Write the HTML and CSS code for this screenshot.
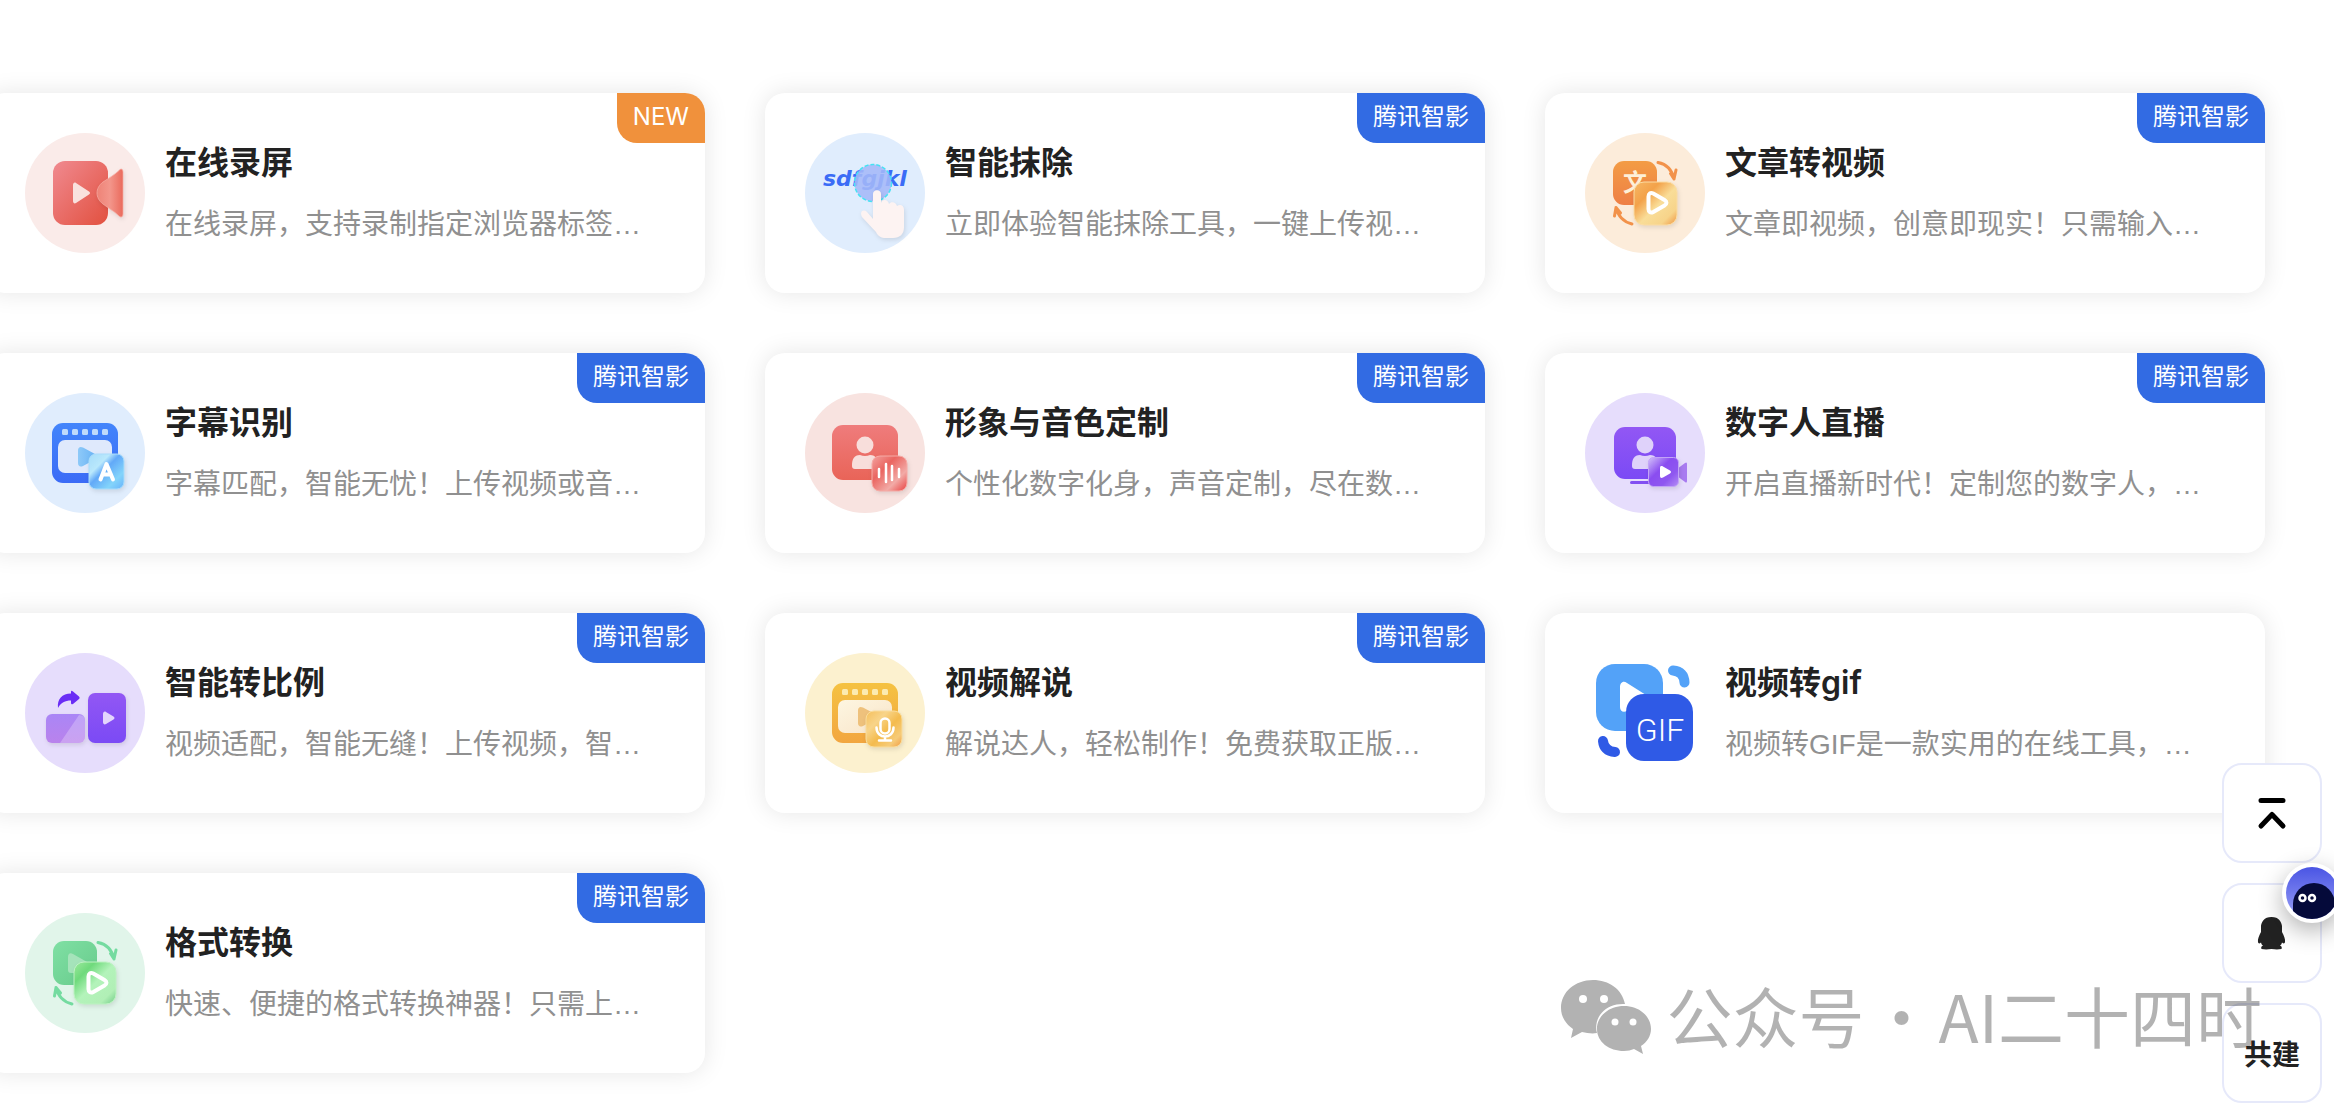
FILE: index.html
```html
<!DOCTYPE html>
<html lang="zh-CN">
<head>
  <meta charset="UTF-8">
  <meta name="viewport" content="width=device-width, initial-scale=1.0">
  <title>AI 工具</title>
  <link rel="stylesheet" href="styles.css">
</head>
<body>
  <!-- Shared gradients and shapes -->
  <svg class="defs" width="0" height="0" aria-hidden="true">
    <defs>
      <linearGradient id="red" x1="0" y1="0" x2="1" y2="1"><stop offset="0" stop-color="#f08a90"/><stop offset="1" stop-color="#e2503f"/></linearGradient>
      <linearGradient id="lens"><stop offset="0" stop-color="#ee8377"/><stop offset=".5" stop-color="#f3968b"/><stop offset="1" stop-color="#ea6a5c"/></linearGradient>
      <linearGradient id="coral" x2="0" y2="1"><stop offset="0" stop-color="#ef7c7c"/><stop offset="1" stop-color="#e96458"/></linearGradient>
      <linearGradient id="coral-glass" x1="0" y1="0" x2="1" y2="1"><stop offset="0" stop-color="#f3a3a0"/><stop offset=".35" stop-color="#ea6560"/><stop offset=".7" stop-color="#f2aaa6"/><stop offset="1" stop-color="#e93f3f"/></linearGradient>
      <linearGradient id="orange" x1="0" y1="0" x2="0" y2="1"><stop offset="0" stop-color="#f39c45"/><stop offset="1" stop-color="#ee7f45"/></linearGradient>
      <linearGradient id="orange-glass" x1="0" y1="0" x2="1" y2="1"><stop offset="0" stop-color="#f6b765"/><stop offset=".3" stop-color="#f3a24a"/><stop offset=".55" stop-color="#f9dd98"/><stop offset=".8" stop-color="#f7d48a"/><stop offset="1" stop-color="#ef9440"/></linearGradient>
      <linearGradient id="blue" x2="0" y2="1"><stop offset="0" stop-color="#4385fb"/><stop offset="1" stop-color="#3b6bf6"/></linearGradient>
      <linearGradient id="blue-play"><stop offset="0" stop-color="#8ec9f8"/><stop offset="1" stop-color="#66b2f5"/></linearGradient>
      <linearGradient id="blue-glass" x1="0" y1="0" x2="1" y2="1"><stop offset="0" stop-color="#a6dcfa"/><stop offset=".3" stop-color="#b9e8fc"/><stop offset=".45" stop-color="#62a9f8"/><stop offset=".75" stop-color="#83d4fb"/><stop offset="1" stop-color="#68b2fb"/></linearGradient>
      <linearGradient id="purple" x2="0" y2="1"><stop offset="0" stop-color="#9257f4"/><stop offset="1" stop-color="#7b4af5"/></linearGradient>
      <linearGradient id="purple-glass" x1="0" y1="0" x2="1" y2="1"><stop offset="0" stop-color="#d3c1fa"/><stop offset=".4" stop-color="#8a4df0"/><stop offset=".7" stop-color="#8f57f0"/><stop offset="1" stop-color="#b48df5"/></linearGradient>
      <linearGradient id="lilac" x2="0" y2="1"><stop offset="0" stop-color="#aa86f6"/><stop offset="1" stop-color="#b982ec"/></linearGradient>
      <linearGradient id="gold" x2="0" y2="1"><stop offset="0" stop-color="#f5c242"/><stop offset="1" stop-color="#f2a640"/></linearGradient>
      <linearGradient id="gold-window" x1="0" y1="0" x2="1" y2="1"><stop offset="0" stop-color="#fdf6e1"/><stop offset="1" stop-color="#f9e4c8"/></linearGradient>
      <linearGradient id="gold-glass" x1="0" y1="0" x2="1" y2="1"><stop offset="0" stop-color="#f5bf5c"/><stop offset=".3" stop-color="#f8d489"/><stop offset=".55" stop-color="#f4bb4e"/><stop offset=".8" stop-color="#f6cb78"/><stop offset="1" stop-color="#f19b43"/></linearGradient>
      <linearGradient id="green" x1="0" y1="0" x2="1" y2="1"><stop offset="0" stop-color="#7fe0a4"/><stop offset="1" stop-color="#68ca8b"/></linearGradient>
      <linearGradient id="green-glass" x1="0" y1="0" x2="1" y2="1"><stop offset="0" stop-color="#9cea9d"/><stop offset=".25" stop-color="#6fda7c"/><stop offset=".5" stop-color="#b3f3ba"/><stop offset=".8" stop-color="#b1efb6"/><stop offset="1" stop-color="#6fcc86"/></linearGradient>
      <linearGradient id="avatar-sky" x2="0" y2="1"><stop offset="0" stop-color="#4a55e4"/><stop offset="1" stop-color="#9aa0f6"/></linearGradient>

      <g id="swap-arrows" fill="none" stroke="currentColor" stroke-width="3" stroke-linecap="round" stroke-linejoin="round">
        <path d="M73 29.500C81 31 87 37 89 46M85.500 40.500L89 46L91 37"/>
        <path d="M47 91C39 89 33 83 31 74.500M29.500 83L31 74.500L35.500 80"/>
      </g>
      <path id="play-outline" d="M63.500 63.500c0-3 2-4.500 4.800-3l11.200 6.500c2.600 1.500 2.600 4 0 5.500l-11.200 6.500c-2.800 1.500-4.800 0-4.800-3z" fill="none" stroke="#fff" stroke-width="4"/>
      <g id="person">
        <circle cx="60" cy="52" r="8.500"/>
        <path d="M47 73c0-7 2-11 8-11q5 2 10 0c6 0 8 4 8 11q0 3-3 3H50q-3 0-3-3z"/>
      </g>
      <g id="film-holes">
        <rect x="37" y="36" width="6" height="6" rx="1.500"/>
        <rect x="47" y="36" width="6" height="6" rx="1.500"/>
        <rect x="57" y="36" width="6" height="6" rx="1.500"/>
        <rect x="67" y="36" width="6" height="6" rx="1.500"/>
        <rect x="77" y="36" width="6" height="6" rx="1.500"/>
      </g>
      <path id="film-play" d="M53 57.500c0-3 2-4.500 5-3L70 61c3 1.500 3 4 0 5.500L58 73c-3 1.500-5 0-5-3z"/>
    </defs>
  </svg>

  <main class="tool-grid">
    <a class="tool-card" href="#">
      <svg class="tool-icon" viewBox="0 0 120 120" aria-hidden="true">
        <circle cx="60" cy="60" r="60" fill="#faebe9"/>
        <rect x="28" y="28" width="55" height="64" rx="12" fill="url(#red)"/>
        <path class="glass" d="M94 37.500C96 35 98 36 98 39v42c0 3-2 4-4 2C89 78 83 75 78 71c-8-6-8-16 0-22 6-4 11-7 16-11.500z" fill="url(#lens)" stroke="#f6b0a8" stroke-width=".7"/>
        <path d="M48 52c0-2 1.500-3 3-2l13 8.500q2 1.500 0 3L51 70c-1.500 1-3 0-3-2z" fill="#f9e1de"/>
      </svg>
      <div class="tool-info">
        <h3 class="tool-title">在线录屏</h3>
        <p class="tool-desc">在线录屏，支持录制指定浏览器标签…</p>
      </div>
      <span class="tag tag-new">NEW</span>
    </a>

    <a class="tool-card" href="#">
      <svg class="tool-icon" viewBox="0 0 120 120" aria-hidden="true">
        <circle cx="60" cy="60" r="60" fill="#e0edfd"/>
        <text class="erase-text" x="18" y="53">sdfgjkl</text>
        <circle cx="68" cy="50" r="18.500" fill="#a4b8f8" fill-opacity=".88" stroke="#45e3f3" stroke-width="1.500" stroke-dasharray="4 2"/>
        <path class="glass" d="M68 61c0-5 8-5 8 0v9c1-4 7-4 8 1 2-3 7-2 8 2 3-2 7-1 7 4v17c0 7-4 11-11 11h-7c-5 0-8-2-10-6L57 84c-3-6 2-8 5-5l6 7z" fill="#fdf3f2"/>
      </svg>
      <div class="tool-info">
        <h3 class="tool-title">智能抹除</h3>
        <p class="tool-desc">立即体验智能抹除工具，一键上传视…</p>
      </div>
      <span class="tag">腾讯智影</span>
    </a>

    <a class="tool-card" href="#">
      <svg class="tool-icon orange" viewBox="0 0 120 120" aria-hidden="true">
        <circle cx="60" cy="60" r="60" fill="#fcecda"/>
        <use href="#swap-arrows"/>
        <rect x="28" y="28" width="44" height="44" rx="11" fill="url(#orange)"/>
        <text class="wen-text" x="38" y="58">文</text>
        <rect class="glass" x="49" y="49" width="43" height="43" rx="10" fill="url(#orange-glass)" stroke="#fbdca4"/>
        <use href="#play-outline"/>
      </svg>
      <div class="tool-info">
        <h3 class="tool-title">文章转视频</h3>
        <p class="tool-desc">文章即视频，创意即现实！只需输入…</p>
      </div>
      <span class="tag">腾讯智影</span>
    </a>

    <a class="tool-card" href="#">
      <svg class="tool-icon" viewBox="0 0 120 120" aria-hidden="true">
        <circle cx="60" cy="60" r="60" fill="#e0edfd"/>
        <rect x="27" y="30" width="66" height="60" rx="11" fill="url(#blue)"/>
        <use href="#film-holes" fill="#bfdafb"/>
        <rect x="33" y="47" width="54" height="33" rx="7" fill="#dfe9fc"/>
        <use href="#film-play" fill="url(#blue-play)"/>
        <rect class="glass" x="64" y="61" width="35" height="35" rx="7" fill="url(#blue-glass)" stroke="#a9dcfb"/>
        <path d="M75.500 86.500L81.500 71l6.500 15.500M78 81.500h8" fill="none" stroke="#fff" stroke-width="4" stroke-linecap="round" stroke-linejoin="round"/>
      </svg>
      <div class="tool-info">
        <h3 class="tool-title">字幕识别</h3>
        <p class="tool-desc">字幕匹配，智能无忧！上传视频或音…</p>
      </div>
      <span class="tag">腾讯智影</span>
    </a>

    <a class="tool-card" href="#">
      <svg class="tool-icon" viewBox="0 0 120 120" aria-hidden="true">
        <circle cx="60" cy="60" r="60" fill="#f8e3e0"/>
        <rect x="27" y="32" width="66" height="55" rx="11" fill="url(#coral)"/>
        <use href="#person" fill="#f8dedb"/>
        <rect class="glass" x="67" y="63" width="35" height="35" rx="8" fill="url(#coral-glass)" stroke="#f6aaa5"/>
        <path d="M74 76v8M81 71v18M87 73v14M94 76v8" stroke="#fff" stroke-width="2.500" stroke-linecap="round"/>
      </svg>
      <div class="tool-info">
        <h3 class="tool-title">形象与音色定制</h3>
        <p class="tool-desc">个性化数字化身，声音定制，尽在数…</p>
      </div>
      <span class="tag">腾讯智影</span>
    </a>

    <a class="tool-card" href="#">
      <svg class="tool-icon" viewBox="0 0 120 120" aria-hidden="true">
        <circle cx="60" cy="60" r="60" fill="#e6ddfc"/>
        <rect x="29" y="34" width="62" height="52" rx="11" fill="url(#purple)"/>
        <use href="#person" fill="#dfd2fa"/>
        <path d="M46.500 89.500H66" stroke="#8350f2" stroke-width="3" stroke-linecap="round"/>
        <path d="M92 76l8-6q2-1.500 2 1v17q0 2.500-2 1l-8-6z" fill="#a87bf0"/>
        <rect class="glass" x="63.500" y="64.500" width="30" height="29" rx="5" fill="url(#purple-glass)" stroke="#c2a4f7"/>
        <path d="M75 75c0-2 1.500-2.500 3-1.500l7 4q2 1.500 0 3l-7 4c-1.500 1-3 .5-3-1.500z" fill="#fff"/>
      </svg>
      <div class="tool-info">
        <h3 class="tool-title">数字人直播</h3>
        <p class="tool-desc">开启直播新时代！定制您的数字人，…</p>
      </div>
      <span class="tag">腾讯智影</span>
    </a>

    <a class="tool-card" href="#">
      <svg class="tool-icon" viewBox="0 0 120 120" aria-hidden="true">
        <circle cx="60" cy="60" r="60" fill="#e6ddfc"/>
        <rect class="glass" x="21" y="61" width="39" height="29" rx="6" fill="url(#lilac)"/>
        <path d="M54 62q6 0 6 6v16q0 6-6 6H35z" fill="#fff" fill-opacity=".25"/>
        <rect class="glass" x="63" y="40" width="38" height="50" rx="7" fill="url(#purple)"/>
        <path d="M78 61c0-2 1.500-3 3-2l7.500 4.500q2 1.500 0 3L81 71c-1.500 1-3 0-3-2z" fill="#e3d6fc"/>
        <path d="M33 55c-1-9 4-14.500 13-14.500v-1.500q0-2 2-.5l6 5q1.500 1.500 0 2.500l-6 5q-2 1-2-1v-2.500c-6 0-10 2-13 7.500z" fill="#6a2df5"/>
      </svg>
      <div class="tool-info">
        <h3 class="tool-title">智能转比例</h3>
        <p class="tool-desc">视频适配，智能无缝！上传视频，智…</p>
      </div>
      <span class="tag">腾讯智影</span>
    </a>

    <a class="tool-card" href="#">
      <svg class="tool-icon" viewBox="0 0 120 120" aria-hidden="true">
        <circle cx="60" cy="60" r="60" fill="#fcf1cf"/>
        <rect x="27" y="30" width="66" height="60" rx="11" fill="url(#gold)"/>
        <use href="#film-holes" fill="#fcebb0"/>
        <rect x="33" y="47" width="54" height="33" rx="7" fill="url(#gold-window)"/>
        <use href="#film-play" fill="#eec17c"/>
        <rect class="glass" x="61" y="58" width="36" height="36" rx="8" fill="url(#gold-glass)" stroke="#f9dc9b"/>
        <path d="M75.500 70a4.500 4.500 0 0 1 9 0v6a4.500 4.500 0 0 1-9 0zM71.500 74.500c0 12 17 12 17 0M80 84v3.500M74 87.500h12" fill="none" stroke="#fff" stroke-width="2.500" stroke-linecap="round"/>
      </svg>
      <div class="tool-info">
        <h3 class="tool-title">视频解说</h3>
        <p class="tool-desc">解说达人，轻松制作！免费获取正版…</p>
      </div>
      <span class="tag">腾讯智影</span>
    </a>

    <a class="tool-card" href="#">
      <svg class="tool-icon" viewBox="0 0 120 120" aria-hidden="true">
        <rect x="11" y="11" width="67" height="67" rx="19" fill="#53a2f8"/>
        <path d="M35 34c0-4 3-7 7-4l19 12q3 2 0 4L42 58c-4 2-7 0-7-4z" fill="#fff"/>
        <rect x="41" y="41" width="67" height="67" rx="18" fill="#2f5ae6"/>
        <text class="gif-text" x="75" y="88">GIF</text>
        <path d="M88 17.500q11 1 11.500 12" fill="none" stroke="#53a2f8" stroke-width="10" stroke-linecap="round"/>
        <path d="M18 88q1 10 12 11" fill="none" stroke="#2f5ae6" stroke-width="10" stroke-linecap="round"/>
      </svg>
      <div class="tool-info">
        <h3 class="tool-title">视频转gif</h3>
        <p class="tool-desc">视频转GIF是一款实用的在线工具，…</p>
      </div>
    </a>

    <a class="tool-card" href="#">
      <svg class="tool-icon green" viewBox="0 0 120 120" aria-hidden="true">
        <circle cx="60" cy="60" r="60" fill="#e1f5ea"/>
        <use href="#swap-arrows"/>
        <rect x="28" y="28" width="44" height="44" rx="11" fill="url(#green)"/>
        <path d="M43 44c0-3 2-5 5-3l14 8v11H46q-3 0-3-3z" fill="#a5e3ba"/>
        <rect class="glass" x="49" y="49" width="42" height="42" rx="10" fill="url(#green-glass)" stroke="#bdf2c2"/>
        <use href="#play-outline"/>
      </svg>
      <div class="tool-info">
        <h3 class="tool-title">格式转换</h3>
        <p class="tool-desc">快速、便捷的格式转换神器！只需上…</p>
      </div>
      <span class="tag">腾讯智影</span>
    </a>
  </main>

  <!-- Floating side buttons -->
  <aside class="side-bar">
    <button class="side-btn" type="button" aria-label="返回顶部">
      <svg width="40" height="40" viewBox="0 0 40 40" fill="none" stroke="#000" stroke-width="5" stroke-linecap="round" stroke-linejoin="round">
        <path d="M9 7.500h22M9 33L20 21.500L31 33"/>
      </svg>
    </button>
    <div class="side-item">
      <button class="side-btn" type="button" aria-label="QQ">
        <svg width="40" height="40" viewBox="0 0 40 40">
          <path d="M19.500 4C27 4 29.500 9 30 13v6c2 4 3.500 7 3 10-.5 2-1.500 1.500-3 .5-.3 1.500-1 2.500-2 3 2 1 2 2 1.500 3.500-3 .5-6 .5-10 0-4 .5-7 .5-10 0-.5-1.500-.5-2.500 1.500-3.500-1-.5-1.700-1.500-2-3-1.500 1-2.500 1.500-3-.5-.5-3 1-6 3-10v-6c.5-4 3-9 10.500-9z" fill="#222"/>
        </svg>
      </button>
      <button class="avatar" type="button" aria-label="助手">
        <svg viewBox="0 0 52 52">
          <rect width="52" height="52" fill="url(#avatar-sky)"/>
          <path d="M7 52V37a21 21 0 0 1 42 0v15z" fill="#050a3a"/>
          <g fill="#050a3a" stroke="#fff" stroke-width="2.500">
            <circle cx="16.500" cy="31" r="3"/>
            <circle cx="26" cy="31" r="3"/>
          </g>
        </svg>
      </button>
    </div>
    <button class="side-btn" type="button">共建</button>
  </aside>

  <div class="watermark">
    <svg class="wechat" viewBox="0 0 90 74" aria-hidden="true">
      <path d="M32 0C14 0 0 12 0 28c0 9 5 16 12 21l-2 9 11-6c5 1 10 2 15 1C32 37 45 23 64 24 61 9 48 0 32 0z"/>
      <path d="M63 26c-15 0-27 10-27 23s12 22 27 22c4 0 7-1 10-2l9 5-2-8c6-4 10-10 10-17 0-13-12-23-27-23z"/>
      <g fill="#fff"><circle cx="22" cy="19" r="4"/><circle cx="43" cy="19" r="4"/><circle cx="54" cy="42" r="3.500"/><circle cx="72" cy="42" r="3.500"/></g>
    </svg>
    <div class="watermark-text">
      <span>公众号</span>
      <span>·</span>
      <span>AI二十四时</span>
    </div>
  </div>
</body>
</html>
```
FILE: styles.css
```css
* {
  box-sizing: border-box;
}

body {
  margin: 0;
  background-color: #fff;
  color: #222;
  font-family: Inter, "Noto Sans CJK SC", sans-serif;
  overflow-x: hidden;
}

.defs {
  position: absolute;
}

/* Tool cards */
.tool-grid {
  display: grid;
  grid-template-columns: repeat(3, 1fr);
  gap: 60px;
  margin: 93px 69px 39px -15px;
}

.tool-card {
  position: relative;
  display: flex;
  align-items: flex-start;
  gap: 20px;
  min-height: 200px;
  padding: 40px;
  border-radius: 20px;
  background-color: #fff;
  box-shadow: 0 0 24px rgba(0, 0, 0, 0.1);
  color: inherit;
  text-decoration: none;
}

.tool-icon {
  flex: none;
  width: 120px;
  height: 120px;
}

.tool-icon.orange {
  color: #f2924a;
}

.tool-icon.green {
  color: #74dba0;
}

.glass {
  filter: drop-shadow(1px 2px 2px rgba(0, 0, 0, 0.1));
}

.erase-text {
  font: italic bold 22px "DejaVu Sans", sans-serif;
  fill: #3b6cf6;
}

.wen-text {
  font: bold 24px "Noto Sans CJK SC", sans-serif;
  fill: #fdf0d8;
}

.gif-text {
  font: 300 32px Roboto, sans-serif;
  fill: #fff;
  text-anchor: middle;
}

.tool-info {
  flex: 1;
  min-width: 0;
  padding-top: 6px;
}

.tool-title {
  margin: 0 0 16px;
  font-size: 32px;
  font-weight: 600;
  line-height: 48px;
}

.tool-desc {
  margin: 0;
  color: #909090;
  font-family: "Liberation Sans", "Noto Sans CJK SC", sans-serif;
  font-size: 28px;
  line-height: 44px;
  white-space: nowrap;
  overflow: hidden;
}

.tag {
  position: absolute;
  top: 0;
  right: 0;
  padding: 0 16px 2px;
  border-radius: 0 20px 0 20px;
  background-color: #326be3;
  color: #fff;
  font-size: 24px;
  line-height: 48px;
}

.tag-new {
  background-color: #f0913c;
}

/* Side buttons */
.side-bar {
  position: fixed;
  right: 12px;
  bottom: 9px;
  display: flex;
  flex-direction: column;
  gap: 20px;
}

.side-item {
  position: relative;
}

.side-btn {
  display: flex;
  align-items: center;
  justify-content: center;
  width: 100px;
  height: 100px;
  padding: 0;
  border: 2px solid #e6e9fa;
  border-radius: 20px;
  background-color: #fff;
  color: #222;
  font: 600 28px Inter, "Noto Sans CJK SC", sans-serif;
  cursor: pointer;
}

.avatar {
  position: absolute;
  top: -20px;
  right: -20px;
  width: 60px;
  height: 60px;
  padding: 0;
  border: 4px solid #fff;
  border-radius: 50%;
  background-color: #fff;
  box-shadow: 0 8px 24px rgba(0, 0, 0, 0.3);
  overflow: hidden;
  cursor: pointer;
}

.avatar svg {
  display: block;
}

/* Watermark laid over the page */
.watermark {
  position: fixed;
  right: 72px;
  bottom: 52px;
  display: flex;
  align-items: flex-start;
  gap: 16px;
  color: #000;
  opacity: 0.3;
  pointer-events: none;
}

.watermark-text {
  display: flex;
  gap: 4px;
  font: 66px/92px "Noto Sans CJK SC", sans-serif;
}

.wechat {
  width: 90px;
  height: 74px;
  margin-top: 12px;
}
```
